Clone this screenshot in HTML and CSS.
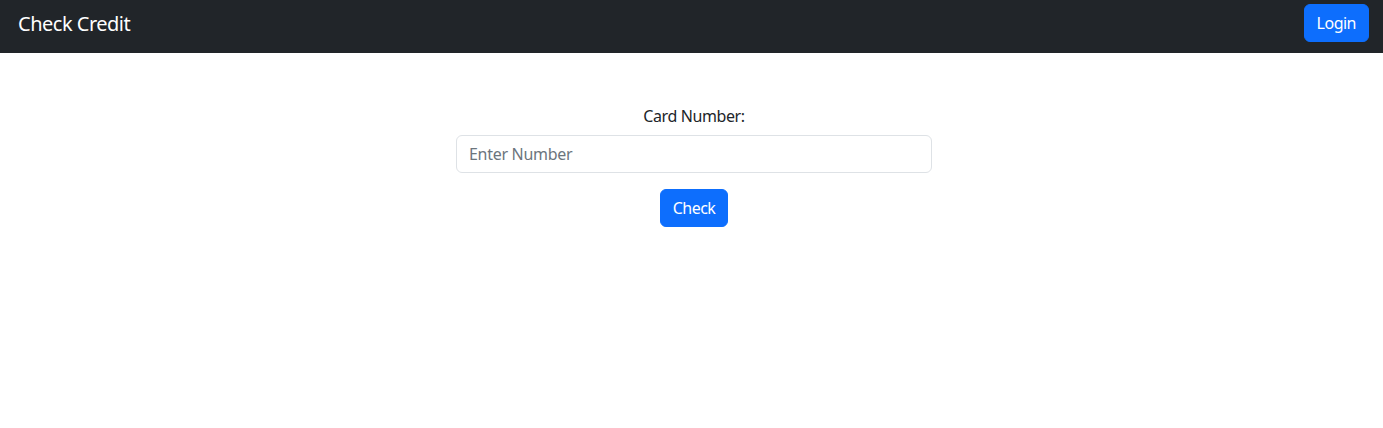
FILE: index.html
```html
<!DOCTYPE html>
<html lang="en">
<head>
<meta charset="utf-8">
<title>Check Credit</title>
<link rel="stylesheet" href="styles.css">
</head>
<body>
<nav class="navbar">
  <a class="brand" href="#">Check Credit</a>
  <button class="btn btn-primary" type="button">Login</button>
</nav>
<main class="main">
  <form class="form">
    <label class="form-label" for="card">Card Number:</label>
    <input class="form-control" id="card" type="text" placeholder="Enter Number">
    <button class="btn btn-primary btn-check" type="button">Check</button>
  </form>
</main>
</body>
</html>
```

FILE: styles.css
```css
* { box-sizing: border-box; }
html, body { margin: 0; padding: 0; }
body {
  font-family: "Noto Sans", "Open Sans", "Liberation Sans", sans-serif;
  font-size: 16px;
  line-height: 24px;
  letter-spacing: -0.4px;
  color: #212529;
  background: #fff;
}
.navbar {
  height: 53px;
  background: #212529;
  display: flex;
  align-items: flex-start;
  justify-content: space-between;
  padding: 4px 14px 0 18px;
}
.brand {
  color: #fff;
  text-decoration: none;
  font-size: 20px;
  line-height: 30px;
  margin-top: 5px;
  letter-spacing: -0.5px;
}
.btn {
  font-family: inherit;
  font-size: 16px;
  line-height: 24px;
  letter-spacing: -0.5px;
  padding: 6px 12px;
  border: 1px solid transparent;
  border-radius: 6px;
  cursor: pointer;
}
.btn-primary {
  background: #0d6efd;
  border-color: #0d6efd;
  color: #fff;
}
.main {
  padding-top: 51px;
  display: flex;
  justify-content: center;
}
.form {
  width: 476px;
  display: flex;
  flex-direction: column;
  align-items: center;
  margin-left: 5px;
}
.form-label {
  margin-bottom: 7px;
}
.form-control {
  width: 100%;
  height: 38px;
  font-family: inherit;
  font-size: 16px;
  letter-spacing: -0.3px;
  padding: 6px 12px;
  border: 1px solid #dee2e6;
  border-radius: 6px;
  color: #212529;
}
.form-control::placeholder { color: #6c757d; }
.btn-check { margin-top: 16px; }
```
